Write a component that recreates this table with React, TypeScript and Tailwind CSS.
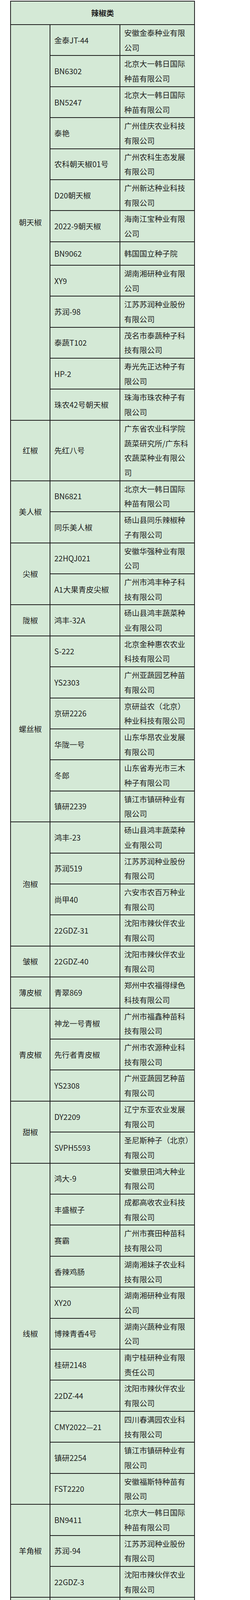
import React from 'react';

interface PepperGroup {
  name: string;
  items: [string, string][];
}

// 辣椒类品种及选育单位
const groups: PepperGroup[] = [
  {
    name: '朝天椒',
    items: [
      ['金泰JT-44', '安徽金泰种业有限公司'],
      ['BN6302', '北京大一韩日国际种苗有限公司'],
      ['BN5247', '北京大一韩日国际种苗有限公司'],
      ['泰艳', '广州佳庆农业科技有限公司'],
      ['农科朝天椒01号', '广州农科生态发展有限公司'],
      ['D20朝天椒', '广州新达种业科技有限公司'],
      ['2022-9朝天椒', '海南江宝种业有限公司'],
      ['BN9062', '韩国国立种子院'],
      ['XY9', '湖南湘研种业有限公司'],
      ['苏润-98', '江苏苏润种业股份有限公司'],
      ['泰蔬T102', '茂名市泰蔬种子科技有限公司'],
      ['HP-2', '寿光先正达种子有限公司'],
      ['珠农42号朝天椒', '珠海市珠农种子有限公司'],
    ],
  },
  {
    name: '红椒',
    items: [['先红八号', '广东省农业科学院蔬菜研究所/广东科农蔬菜种业有限公司']],
  },
  {
    name: '美人椒',
    items: [
      ['BN6821', '北京大一韩日国际种苗有限公司'],
      ['同乐美人椒', '砀山县同乐辣椒种子有限公司'],
    ],
  },
  {
    name: '尖椒',
    items: [
      ['22HQJ021', '安徽华强种业有限公司'],
      ['A1大果青皮尖椒', '广州市鸿丰种子科技有限公司'],
    ],
  },
  {
    name: '陇椒',
    items: [['鸿丰-32A', '砀山县鸿丰蔬菜种业有限公司']],
  },
  {
    name: '螺丝椒',
    items: [
      ['S-222', '北京金种惠农农业科技有限公司'],
      ['YS2303', '广州亚蔬园艺种苗有限公司'],
      ['京研2226', '京研益农（北京）种业科技有限公司'],
      ['华陇一号', '山东华昂农业发展有限公司'],
      ['冬郎', '山东省寿光市三木种子有限公司'],
      ['镇研2239', '镇江市镇研种业有限公司'],
    ],
  },
  {
    name: '泡椒',
    items: [
      ['鸿丰-23', '砀山县鸿丰蔬菜种业有限公司'],
      ['苏润519', '江苏苏润种业股份有限公司'],
      ['尚甲40', '六安市农百万种业有限公司'],
      ['22GDZ-31', '沈阳市辣伙伴农业有限公司'],
    ],
  },
  {
    name: '皱椒',
    items: [['22GDZ-40', '沈阳市辣伙伴农业有限公司']],
  },
  {
    name: '薄皮椒',
    items: [['青翠869', '郑州中农福得绿色科技有限公司']],
  },
  {
    name: '青皮椒',
    items: [
      ['神龙一号青椒', '广州市福鑫种苗科技有限公司'],
      ['先行者青皮椒', '广州市农源种业科技有限公司'],
      ['YS2308', '广州亚蔬园艺种苗有限公司'],
    ],
  },
  {
    name: '甜椒',
    items: [
      ['DY2209', '辽宁东亚农业发展有限公司'],
      ['SVPH5593', '圣尼斯种子（北京）有限公司'],
    ],
  },
  {
    name: '线椒',
    items: [
      ['鸿大-9', '安徽景田鸿大种业有限公司'],
      ['丰盛椒子', '成都高收农业科技有限公司'],
      ['赛霸', '广州市赛田种苗科技有限公司'],
      ['香辣鸡肠', '湖南湘妹子农业科技有限公司'],
      ['XY20', '湖南湘研种业有限公司'],
      ['博辣青香4号', '湖南兴蔬种业有限公司'],
      ['桂研2148', '南宁桂研种业有限责任公司'],
      ['22DZ-44', '沈阳市辣伙伴农业有限公司'],
      ['CMY2022—21', '四川春满园农业科技有限公司'],
      ['镇研2254', '镇江市镇研种业有限公司'],
      ['FST2220', '安徽福斯特种苗有限公司'],
    ],
  },
  {
    name: '羊角椒',
    items: [
      ['BN9411', '北京大一韩日国际种苗有限公司'],
      ['苏润-94', '江苏苏润种业股份有限公司'],
      ['22GDZ-3', '沈阳市辣伙伴农业有限公司'],
    ],
  },
  {
    name: '牛角椒',
    items: [['苏椒516', '江苏省农业科学院']],
  },
];

const App: React.FC = () => {
  return (
    <div className="min-h-screen bg-white pt-[2px] font-['Noto_Sans_CJK_SC',sans-serif] text-[19.5px] text-[#1f1f1f]">
      <table className="ml-[26px] w-[471px] table-fixed border-collapse bg-[#d4e9d6]">
        <colgroup>
          <col className="w-[101px]" />
          <col className="w-[179px]" />
          <col className="w-[191px]" />
        </colgroup>
        <thead>
          <tr className="h-[60px]">
            <th colSpan={3} className="border-2 border-[#1c1c1c] p-0 text-center font-bold leading-[30px]">
              辣椒类
            </th>
          </tr>
        </thead>
        <tbody>
          {groups.map((group) =>
            group.items.map(([variety, company], i) => (
              <tr key={group.name + variety} className="h-[60px]">
                {i === 0 && (
                  <td
                    rowSpan={group.items.length}
                    className="border-2 border-[#1c1c1c] p-0 text-center align-middle leading-[30px]"
                  >
                    {group.name}
                  </td>
                )}
                <td className="border-2 border-[#1c1c1c] py-0 pl-[10px] align-middle leading-[30px]">
                  {variety}
                </td>
                <td className="border-2 border-[#1c1c1c] py-[1px] pl-[10px] pr-[10px] align-middle leading-[37.7px] [line-break:anywhere]">
                  {company}
                </td>
              </tr>
            ))
          )}
        </tbody>
      </table>
    </div>
  );
};

export default App;
